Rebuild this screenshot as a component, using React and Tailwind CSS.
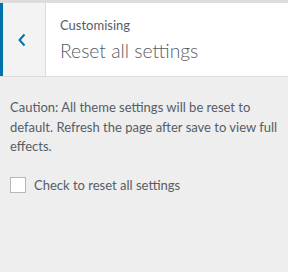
export default function App() {
  return (
    <div className="w-[288px] h-[272px] bg-[#eeeeee] overflow-hidden" style={{ fontFamily: 'Lato, sans-serif' }}>
      <div className="h-[3px] bg-[#dddddd]" />
      <div className="flex h-[74px] bg-white border-b border-[#dddddd]">
        <div className="w-[46px] flex items-center bg-[#f3f3f3] border-l-[3px] border-[#0073aa] border-r border-r-[#dddddd]">
          <svg width="10" height="14" viewBox="0 0 10 14" className="ml-[14px]">
            <path d="M7.5 1.5 L2.5 7 L7.5 12.5" fill="none" stroke="#0073aa" strokeWidth="2" />
          </svg>
        </div>
        <div className="pl-[14px] pt-[13px] text-[#555d66]">
          <div className="text-[13px] leading-[18px]">Customising</div>
          <div className="text-[19.3px] leading-[28px] font-light mt-[3px]">Reset all settings</div>
        </div>
      </div>
      <div className="px-[10px] pt-[21px] text-[#555d66]">
        <p className="text-[13px] leading-[19.5px]">
          Caution: All theme settings will be reset to default. Refresh the page after save to view full effects.
        </p>
        <label className="flex items-center mt-[19px] text-[13px]">
          <span className="w-[16px] h-[16px] bg-white border border-[#b4b9be] shrink-0" />
          <span className="ml-[8px]">Check to reset all settings</span>
        </label>
      </div>
    </div>
  );
}
